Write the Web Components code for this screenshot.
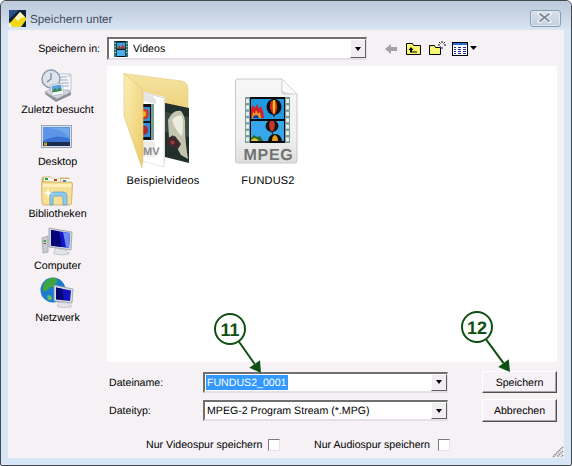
<!DOCTYPE html>
<html>
<head>
<meta charset="utf-8">
<title>Speichern unter</title>
<style>
  html,body{margin:0;padding:0;background:#fff;}
  body{font-family:"Liberation Sans",sans-serif;font-size:10.600px;color:#000;text-rendering:geometricPrecision;}
</style>
</head>
<body>
<save-dialog>
  <span slot="title">Speichern unter</span>

  <span slot="lookin">Speichern in:</span>
  <dlg-combo slot="location" icon="film">Videos</dlg-combo>
  <dlg-toolbar slot="tools"></dlg-toolbar>

  <place-item slot="places" icon="recent">Zuletzt besucht</place-item>
  <place-item slot="places" icon="desktop">Desktop</place-item>
  <place-item slot="places" icon="libraries">Bibliotheken</place-item>
  <place-item slot="places" icon="computer">Computer</place-item>
  <place-item slot="places" icon="network">Netzwerk</place-item>

  <file-item slot="files" icon="folder">Beispielvideos</file-item>
  <file-item slot="files" icon="mpeg">FUNDUS2</file-item>

  <span slot="name-label">Dateiname:</span>
  <dlg-combo slot="name-input" selected>FUNDUS2_0001</dlg-combo>
  <dlg-button slot="save">Speichern</dlg-button>
  <span slot="type-label">Dateityp:</span>
  <dlg-combo slot="type-input">MPEG-2 Program Stream (*.MPG)</dlg-combo>
  <dlg-button slot="cancel">Abbrechen</dlg-button>

  <check-opt slot="opts" style="width:134px">Nur Videospur speichern</check-opt>
  <check-opt slot="opts" style="width:136px">Nur Audiospur speichern</check-opt>

  <call-out slot="marks" num="11" cx="230" cy="329" tx="261" ty="373"></call-out>
  <call-out slot="marks" num="12" cx="477" cy="327" tx="510" ty="372"></call-out>
</save-dialog>

<script>
// film strip with the balloons, used by the big file icon
function filmStrip(x,y){
  let holes='';
  for(let i=0;i<7;i++){
    holes+=`<rect x="${x+1}" y="${y+2+i*6.4}" width="3" height="4" fill="#e6eeee"/><rect x="${x+41}" y="${y+2+i*6.4}" width="3" height="4" fill="#e6eeee"/>`;
  }
  return `
    <rect x="${x}" y="${y}" width="45" height="46" fill="#7c9c9c"/>
    <rect x="${x+5}" y="${y}" width="35" height="46" fill="#0a0a0a"/>
    ${holes}
    <rect x="${x+6}" y="${y+2}" width="33" height="20" fill="#1f9ae0"/>
    <rect x="${x+6}" y="${y+24}" width="33" height="20" fill="#38a6ea"/>
    <path d="M${x+6} ${y+21}v-9l2-4 2 3 2-4 2 5 2-3 2 5 1 7z" fill="#d3202a"/>
    <path d="M${x+7} ${y+21}l1-6 2 2 1-4 2 4 2-2 1 6z" fill="#f5a31e"/>
    <path d="M${x+8} ${y+21}l1-3 1 1 1-2 1 2 1-1 1 3z" fill="#1838a8"/>
    <ellipse cx="${x+29}" cy="${y+10}" rx="7.500" ry="8" fill="#0e0e0e"/>
    <path d="M${x+26} ${y+4}q-3 7 2 13h2q4-6 1-13z" fill="#d8262a"/>
    <path d="M${x+28} ${y+3}q-1 7 .5 14h1q1.500-7 .5-14z" fill="#f6c21c"/>
    <path d="M${x+28} ${y+18}h2l-.5 2h-1z" fill="#421"/>
    <ellipse cx="${x+27}" cy="${y+29}" rx="6.500" ry="6" fill="#141414"/>
    <path d="M${x+25} ${y+24}q-2 5 1 10h2q3-5 1-10z" fill="#c8342a"/>
    <path d="M${x+26.500} ${y+35}h1.500l-.5 3h-.5z" fill="#321"/>
    <path d="M${x+23} ${y+44}q1-7 7-7t7 7z" fill="#0e0e0e"/>
    <path d="M${x+27} ${y+44}q0-5 3-6 3 1 3 6z" fill="#e8a01c"/>
    <path d="M${x+6} ${y+44}v-3l3-3 3 2 3-1 3 5z" fill="#2a6a30"/>
    <path d="M${x+6} ${y+44}v-1l3-2 3 1 2 2z" fill="#e0c030"/>`;
}

const placeIcons={
  recent:`
    <path d="M5 25l11 8 15-7v-3l-14 6-11-7z" fill="#8d929a"/>
    <path d="M5 23l12-6 14 6-14 7z" fill="#d5d8de" stroke="#8d929a" stroke-width=".6"/>
    <rect x="15" y="5" width="16" height="16" fill="#f6f8fb" stroke="#a7b2bf" stroke-width=".7"/>
    <path d="M18 8h9M18 11h10M22 14h7M22 17h7" stroke="#9ab" stroke-width="1"/>
    <path d="M27 6h3v3z" fill="#c8d3dd"/>
    <circle cx="11" cy="10" r="9" fill="#dde4ee" stroke="#8b98a8" stroke-width="1.4"/>
    <path d="M11 4v6l-4 3" fill="none" stroke="#7a8798" stroke-width="1.3"/>
    <path d="M10 16l12-2 2 11-12 2z" fill="#f2f6fa" stroke="#9aa7b5" stroke-width=".6"/>
    <path d="M11.500 17l9.500-1.600 .9 6-9.600 1.600z" fill="#5aa0e0"/>
    <path d="M12 23l3-4 2 2 3-3 1.800 3.800-9.600 1.600z" fill="#3d8a4a"/>`,
  desktop:`
    <rect x="1.500" y="4.500" width="30" height="22" fill="#dce2ec" stroke="#9aa3b2"/>
    <rect x="3" y="6" width="27" height="19" fill="#3a72d4"/>
    <path d="M3 6h27v12q-12-6-27 2z" fill="#5c95e6"/>
    <path d="M8 7q14 1 21 9v-9z" fill="#7fb0ee" opacity=".7"/>
    <rect x="3" y="21" width="27" height="4" fill="#1c2c50"/>
    <rect x="4" y="21.500" width="3" height="3" fill="#e8a030"/>
    <rect x="5" y="22" width="1" height="1" fill="#2f9a40"/>`,
  libraries:`
    <path d="M2 6q0-2 2-2h7l2 2h5l2-1h8q2 0 2 2v4H2z" fill="#e9c86a" stroke="#b99a4e" stroke-width=".7"/>
    <rect x="4" y="4.500" width="8" height="4" fill="#f8f8f4"/><rect x="5" y="5" width="3" height="2" fill="#2aa83a"/>
    <rect x="12" y="5.500" width="8" height="4" fill="#f8f8f4"/><rect x="14" y="6" width="3" height="2" fill="#d23a2a"/>
    <rect x="21" y="6" width="10" height="4" fill="#f8f8f4"/><rect x="23" y="7" width="3" height="2" fill="#2a7ad8"/>
    <path d="M1.500 11q0-2 2-2h27q2 0 2 2l-1 19q0 2-2 2H4q-2 0-2-2z" fill="#f7df94" stroke="#c9a85a" stroke-width=".8"/>
    <path d="M3 11h28v3H3z" fill="#fdf0bd"/>
    <path d="M10 32V23q0-4 4-4h9q4 0 4 4v9h-4v-7q0-2-2-2h-6q-2 0-2 2v7z" fill="#8ecbea" stroke="#5a9cc8" stroke-width=".7"/>
    <path d="M8 15l1 4 4 1-4 1-1 4-1-4-4-1 4-1z" fill="#fff"/>`,
  computer:`
    <path d="M2 13l6-2v16l-5 1z" fill="#c9ccd1" stroke="#8b8f96" stroke-width=".6"/>
    <rect x="3.500" y="15" width="2.500" height="2" fill="#4fa04a"/><rect x="3.500" y="18" width="2.500" height="1" fill="#666"/>
    <path d="M9 3l23 4-1 18-22-3z" fill="#d3d6dc" stroke="#8e939c" stroke-width=".7"/>
    <path d="M11 5l19 3-1 15-18-2.500z" fill="#1414c8"/>
    <path d="M11 5l8 1.200 3 15.800-11-1.300z" fill="#050578"/>
    <path d="M23 7l7 1-1 15-3-.5z" fill="#6e8cf0"/>
    <path d="M15 23l11 2 1 2q4 1 2 2-7 2-15 0-1-2 1-3z" fill="#e1e3e7" stroke="#a3a7ad" stroke-width=".5"/>`,
  network:`
    <circle cx="13" cy="13" r="12.500" fill="#1c7ad0"/>
    <path d="M4 6q5-6 12-5 3 4-1 6-1 4-5 3-2 5-7 4-1-4 1-8z" fill="#3fa63e"/>
    <path d="M16 12q5-2 8 1 0 6-4 9-5-1-4-10z" fill="#2f9a3a"/>
    <path d="M8 18q3 0 4 3-1 3-3 2-3-2-1-5z" fill="#6ac05a"/>
    <path d="M14 8l19 4-1 14-18-2z" fill="#d8dbe0" stroke="#8d929a" stroke-width=".7"/>
    <path d="M16 10.500l15 3-1 10.500-14-1.500z" fill="#1212c0"/>
    <path d="M16 10.500l6 1.200 2 11.200-8-.9z" fill="#060670"/>
    <path d="M18 25l11 1 1 2q3 1 1 2-6 1-13 0-1-2 0-3z" fill="#e2e4e8" stroke="#a3a7ad" stroke-width=".5"/>`
};

class SaveDialog extends HTMLElement{
  constructor(){
    super();
    this.attachShadow({mode:"open"});
  }
  getStyles(){
    return `<style>
      :host{display:block;position:relative;width:572px;height:466px;box-sizing:border-box;overflow:hidden;
        border:1px solid #43484d;border-radius:6px 6px 2px 2px;background:#d6e6f6;}
      .title{height:29px;display:flex;align-items:center;padding:6px 2px 0 8px;box-sizing:border-box;
        background:linear-gradient(#bccadb,#c7d4e4 45%,#dbe6f3);border-radius:5px 5px 0 0;}
      .title svg{flex:none;margin-right:3px;margin-top:-1px;}
      .cap{flex:1;font-size:11.700px;color:#3f4d5c;margin-top:1px;}
      .close{width:31px;height:17px;box-sizing:border-box;margin:-1px 8px 0 0;border:1px solid #8b9bb0;border-radius:3px;
        background:linear-gradient(#d6e0ec,#c4d0e0);display:flex;align-items:center;justify-content:center;box-shadow:inset 0 0 0 1px #dfe7f1;}
      .client{position:relative;margin:0 7px;height:428px;background:#f5f1f5;display:grid;
        grid-template-columns:99px 450px;grid-template-rows:36px 296px 96px;}
      .lookin{display:flex;justify-content:flex-end;align-items:center;padding:1px 7px 0 0;height:22px;margin-top:7px;}
      .top{display:flex;margin-top:7px;height:23px;align-items:center;}
      .places{padding-top:3px;display:flex;flex-direction:column;}
      .files{background:#fff;display:flex;gap:5px;padding:7px 0 0 6px;box-sizing:border-box;align-items:flex-start;}
      .bottom{display:grid;grid-template-columns:94px 245px 34px 75px;grid-template-rows:22px 23px auto;row-gap:6px;
        padding:9px 0 0 2px;box-sizing:border-box;align-items:center;grid-column:2;}
      .opts{grid-column:1 / 5;display:flex;gap:34px;padding-left:37px;margin-top:4px;}
      .grip{position:absolute;right:0;bottom:0;}
      ::slotted([slot=location]){width:260px;height:23px;}
      ::slotted([slot=name-label]),::slotted([slot=type-label]){padding-top:1px;}
    </style>`;
  }
  getTemplate(){
    const template=document.createElement('template');
    template.innerHTML=`
      ${this.getStyles()}
      <div class="title">
        <svg width="18" height="17" viewBox="0 0 18 17">
          <rect width="17" height="17" fill="#12203a"/>
          <path d="M0 0h10L0 9z" fill="#2a4f8a"/>
          <path d="M0 14L11 2l6 6v2L12 17H3z" fill="#f4d818"/>
          <path d="M6 8l5-6 5 5-4 1-3 3z" fill="#fff7c0"/>
          <path d="M0 12l3 5H0z" fill="#fff"/>
        </svg>
        <div class="cap"><slot name="title"></slot></div>
        <div class="close">
          <svg width="15" height="11" viewBox="0 0 15 11">
            <path d="M2.500 1.500l10 8M12.500 1.500l-10 8" stroke="#f2f5f9" stroke-width="4" stroke-linecap="round"/>
            <path d="M2.500 1.500l10 8M12.500 1.500l-10 8" stroke="#7f8a96" stroke-width="2"/>
          </svg>
        </div>
      </div>
      <div class="client">
        <div class="lookin"><slot name="lookin"></slot></div>
        <div class="top"><slot name="location"></slot><slot name="tools"></slot></div>
        <div class="places"><slot name="places"></slot></div>
        <div class="files"><slot name="files"></slot></div>
        <div class="bottom">
          <slot name="name-label"></slot><slot name="name-input"></slot><span></span><slot name="save"></slot>
          <slot name="type-label"></slot><slot name="type-input"></slot><span></span><slot name="cancel"></slot>
          <div class="opts"><slot name="opts"></slot></div>
        </div>
        <svg class="grip" width="12" height="12" viewBox="0 0 12 12">
          <path d="M11 1L1 11M11 5L5 11M11 9L9 11" stroke="#8a8a8f" stroke-width="1.700" stroke-dasharray="1.400 .7"/>
        </svg>
      </div>
      <slot name="marks"></slot>`;
    return template;
  }
  render(){
    this.shadowRoot.appendChild(this.getTemplate().content.cloneNode(true));
  }
  connectedCallback(){
    this.render();
  }
}
customElements.define('save-dialog',SaveDialog);

class DlgCombo extends HTMLElement{
  constructor(){
    super();
    this.attachShadow({mode:"open"});
  }
  connectedCallback(){
    const icon=this.getAttribute('icon')==='film';
    const sel=this.hasAttribute('selected');
    this.shadowRoot.innerHTML=`
      <style>
        :host{display:block;height:21px;box-sizing:border-box;background:#fff;position:relative;
          border-top:2px solid #6f6f6f;border-left:2px solid #6f6f6f;border-right:1px solid #e4e1e6;border-bottom:2px solid #e4e1e6;}
        .row{display:flex;align-items:center;height:100%;padding-left:1px;white-space:nowrap;}
        .txt{padding:1px 1px 0;line-height:14px;}
        .sel{background:#3399ff;color:#fff;}
        svg.i{margin:0 4px 0 4px;flex:none;}
        .btn{position:absolute;right:0;top:0;bottom:0;width:16px;box-sizing:border-box;background:#f1eef2;
          border-right:1px solid #5f5f5f;border-bottom:1px solid #5f5f5f;border-left:1px solid #fff;border-top:1px solid #fff;
          display:flex;align-items:center;justify-content:center;}
        .btn i{display:block;width:0;height:0;border:3.500px solid transparent;border-top:4px solid #000;border-bottom:0;}
      </style>
      <div class="row">
        ${icon?`<svg class="i" width="14" height="16" viewBox="0 0 14 16">
          <rect width="14" height="16" fill="#2f6f70"/>
          <rect x="2.500" y="0" width="9" height="16" fill="#111"/>
          <rect x="3" y="1.500" width="8" height="6" fill="#3aa0e8"/><rect x="3" y="9" width="8" height="6" fill="#4aaef0"/>
          <path d="M3 7.500l2-3 2 2 2-3 2 4z" fill="#b03a2a"/>
          <path d="M.7 2h1v1h-1zM.7 5h1v1h-1zM.7 8h1v1h-1zM.7 11h1v1h-1zM12.300 2h1v1h-1zM12.300 5h1v1h-1zM12.300 8h1v1h-1zM12.300 11h1v1h-1z" fill="#dfe"/>
        </svg>`:''}
        <span class="txt ${sel?'sel':''}"><slot></slot></span>
      </div>
      <div class="btn"><i></i></div>`;
  }
}
customElements.define('dlg-combo',DlgCombo);

class DlgToolbar extends HTMLElement{
  constructor(){
    super();
    this.attachShadow({mode:"open"});
  }
  connectedCallback(){
    this.shadowRoot.innerHTML=`
      <style>
        :host{display:flex;align-items:center;margin-left:17px;height:20px;}
        svg{display:block;}
      </style>
      <svg width="112" height="20" viewBox="384 38 112 20">
        <defs>
          <pattern id="dith" width="2" height="2" patternUnits="userSpaceOnUse">
            <rect width="2" height="2" fill="#ffff3c"/><rect width="1" height="1" fill="#f0f0a8"/><rect x="1" y="1" width="1" height="1" fill="#f0f0a8"/>
          </pattern>
        </defs>
        <path d="M385 48l6-5v3h6v4h-6v3z" fill="#a3a3a6"/>
        <path d="M406.500 42.500h6l1 2h7v9h-14z" fill="url(#dith)" stroke="#000"/>
        <path d="M411 46l-2.500 3h1.500v2.500h7v-1h-5v-1.500h1.500z" fill="#000"/>
        <path d="M429.500 44.500h5l1 2h5v7h-11z" fill="url(#dith)" stroke="#000"/>
        <path d="M442 40v2M442 46v2M438 44h2M444 44h2M439 41l1.500 1.500M445 41l-1.500 1.500M439 47l1.500-1.500" stroke="#111" stroke-width="1"/>
        <rect x="452.500" y="41.500" width="15" height="13" fill="#fff" stroke="#000"/>
        <rect x="453" y="42" width="14" height="2" fill="#2470d8"/>
        <path d="M454 46h2v1h-2zM454 48h2v1h-2zM454 50h2v1h-2zM454 52h2v1h-2zM458 46h3v1h-3zM458 48h3v1h-3zM458 50h3v1h-3zM458 52h3v1h-3zM463 46h3v1h-3zM463 48h3v1h-3zM463 50h3v1h-3zM463 52h3v1h-3z" fill="#1a2a9a"/>
        <path d="M470 45h7l-3.500 4z" fill="#000"/>
      </svg>`;
  }
}
customElements.define('dlg-toolbar',DlgToolbar);

class PlaceItem extends HTMLElement{
  constructor(){
    super();
    this.attachShadow({mode:"open"});
  }
  connectedCallback(){
    this.shadowRoot.innerHTML=`
      <style>
        :host{display:flex;flex-direction:column;align-items:center;height:52px;}
        svg{display:block;flex:none;}
        .l{line-height:14px;white-space:nowrap;font-size:10.700px;}
      </style>
      <svg width="35" height="34" viewBox="0 0 35 34">${placeIcons[this.getAttribute('icon')]}</svg>
      <div class="l"><slot></slot></div>`;
  }
}
customElements.define('place-item',PlaceItem);

class FileItem extends HTMLElement{
  constructor(){
    super();
    this.attachShadow({mode:"open"});
  }
  getIcon(){
    if(this.getAttribute('icon')==='folder'){
      return `<svg width="100" height="100" viewBox="113 73 100 100">
        <defs>
          <linearGradient id="back" x1="0" y1="0" x2="0" y2="1"><stop offset="0" stop-color="#f6e4a2"/><stop offset="1" stop-color="#e8c766"/></linearGradient>
          <linearGradient id="flap" x1="0" y1="0" x2="1" y2="1"><stop offset="0" stop-color="#fbeeb4"/><stop offset="1" stop-color="#eccb68"/></linearGradient>
          <filter id="soft"><feGaussianBlur stdDeviation=".6"/></filter>
        </defs>
        <path d="M124 73.500L182 81q5 1 6 6v30l-50 15z" fill="url(#back)" stroke="#e3c97c" stroke-width=".5"/>
        <path d="M142 90l3 2 20 5v68l-19-6-4 4z" fill="#e6e6e6"/>
        <path d="M143 93l21 5v69l-21-6z" fill="#fff" stroke="#cfcfcf" stroke-width=".5"/>
        <path d="M143 94l10 2 3 4v4l-13-3z" fill="#e4e4e4"/>
        <rect x="143" y="104" width="8" height="36" fill="#111"/>
        <rect x="143" y="107" width="7" height="14" fill="#2f8fd8"/>
        <rect x="143" y="123" width="7" height="14" fill="#2f8fd8"/>
        <path d="M143 109q6-1 6 5t-6 5z" fill="#c8402a"/>
        <path d="M143 111q3 0 3 3t-3 3z" fill="#f0b020"/>
        <path d="M143 126q5-1 5 4t-5 5z" fill="#a82a2a"/>
        <path d="M151 104h3v36h-3z" fill="#7c9c9c"/>
        <path d="M143 141h12v17l-12-2z" fill="#eeeeea"/>
        <text x="143" y="155" font-weight="700" font-size="11" fill="#8b8b8b">MV</text>
        <path d="M165 103l24 5v55l-24-6z" fill="#22302c"/>
        <g filter="url(#soft)">
          <path d="M165 112l24 5v20l-24-5z" fill="#3a4a42"/>
          <path d="M168 120q5-11 13-9 5 6 4 16 0 14 3 32l-7-4q-6-10-8-20l-4 3z" fill="#c4c5ae"/>
          <path d="M172 120q5-6 10-4 2 9 0 20-6-4-10-16z" fill="#ecece0"/>
          <path d="M166 138l9-2 6 8-3 5-11-3z" fill="#3a2a2c"/>
          <path d="M170 142l3-2 2 3-3 2z" fill="#a5343c"/>
        </g>
        <path d="M124 73.500l18 15.500q1 1 1 3v60l-1 16-18-52z" fill="url(#flap)" stroke="#e0c272" stroke-width=".6"/>
      </svg>`;
    }
    return `<svg width="100" height="100" viewBox="218 73 100 100">
      <defs><linearGradient id="pg" x1="0" y1="0" x2="0" y2="1"><stop offset="0" stop-color="#f7f7f7"/><stop offset=".7" stop-color="#efefef"/><stop offset="1" stop-color="#dedede"/></linearGradient></defs>
      <path d="M235.500 81q0-2 2-2h44.500l15 15v67q0 2-2 2h-57.500q-2 0-2-2z" fill="url(#pg)" stroke="#c8c8c8"/>
      <path d="M282 79q1 13 15 15l-13 1q-3-1-3-4z" fill="#d6d8da"/>
      <path d="M282 79l15 15q-13 0-15-3z" fill="#fbfbfb" stroke="#c4c4c4" stroke-width=".6"/>
      ${filmStrip(245,97)}
      <text x="243.500" y="159.500" font-weight="700" font-size="16" letter-spacing=".7" fill="#737373">MPEG</text>
    </svg>`;
  }
  connectedCallback(){
    this.shadowRoot.innerHTML=`
      <style>
        :host{display:flex;flex-direction:column;align-items:center;width:100px;}
        svg{display:block;flex:none;}
        .l{line-height:14px;white-space:nowrap;font-size:11px;letter-spacing:.2px;padding-top:1px;}
      </style>
      ${this.getIcon()}
      <div class="l"><slot></slot></div>`;
  }
}
customElements.define('file-item',FileItem);

class DlgButton extends HTMLElement{
  constructor(){
    super();
    this.attachShadow({mode:"open"});
  }
  connectedCallback(){
    this.shadowRoot.innerHTML=`
      <style>
        :host{display:flex;align-items:center;justify-content:center;height:100%;box-sizing:border-box;background:#f5f1f5;padding-top:1px;
          border:1px solid;border-color:#fff #4f4f4f #4f4f4f #fff;box-shadow:inset -1px -1px 0 #a8a6aa;}
      </style>
      <slot></slot>`;
  }
}
customElements.define('dlg-button',DlgButton);

class CheckOpt extends HTMLElement{
  constructor(){
    super();
    this.attachShadow({mode:"open"});
  }
  connectedCallback(){
    this.shadowRoot.innerHTML=`
      <style>
        :host{display:flex;align-items:center;justify-content:space-between;height:13px;white-space:nowrap;}
        .box{width:12px;height:12px;box-sizing:border-box;background:#fff;border:1px solid;border-color:#7a7a7a #e6e3e8 #e6e3e8 #7a7a7a;}
      </style>
      <span><slot></slot></span><div class="box"></div>`;
  }
}
customElements.define('check-opt',CheckOpt);

// the green numbered markers lie over the dialog, so they are placed by coordinates
class CallOut extends HTMLElement{
  constructor(){
    super();
    this.attachShadow({mode:"open"});
  }
  connectedCallback(){
    const cx=+this.getAttribute('cx'),cy=+this.getAttribute('cy');
    const tx=+this.getAttribute('tx'),ty=+this.getAttribute('ty');
    const a=Math.atan2(ty-cy,tx-cx),r=15;
    const sx=cx+Math.cos(a)*r,sy=cy+Math.sin(a)*r;
    const bx=tx-Math.cos(a)*11,by=ty-Math.sin(a)*11;
    const nx=-Math.sin(a)*6.5,ny=Math.cos(a)*6.5;
    this.shadowRoot.innerHTML=`
      <style>
        :host{position:absolute;left:-1px;top:-1px;width:572px;height:466px;pointer-events:none;}
        svg{display:block;}
      </style>
      <svg width="572" height="466" viewBox="0 0 572 466">
        <line x1="${sx}" y1="${sy}" x2="${bx}" y2="${by}" stroke="#0e4f12" stroke-width="2"/>
        <path d="M${tx} ${ty}L${bx+nx} ${by+ny}L${bx-nx} ${by-ny}z" fill="#0e4f12"/>
        <circle cx="${cx}" cy="${cy}" r="${r}" fill="#fff" stroke="#0e4f12" stroke-width="2"/>
        <text x="${cx}" y="${cy+6.500}" text-anchor="middle" font-weight="700" font-size="18" fill="#0e4f12">${this.getAttribute('num')}</text>
      </svg>`;
  }
}
customElements.define('call-out',CallOut);
</script>
</body>
</html>
